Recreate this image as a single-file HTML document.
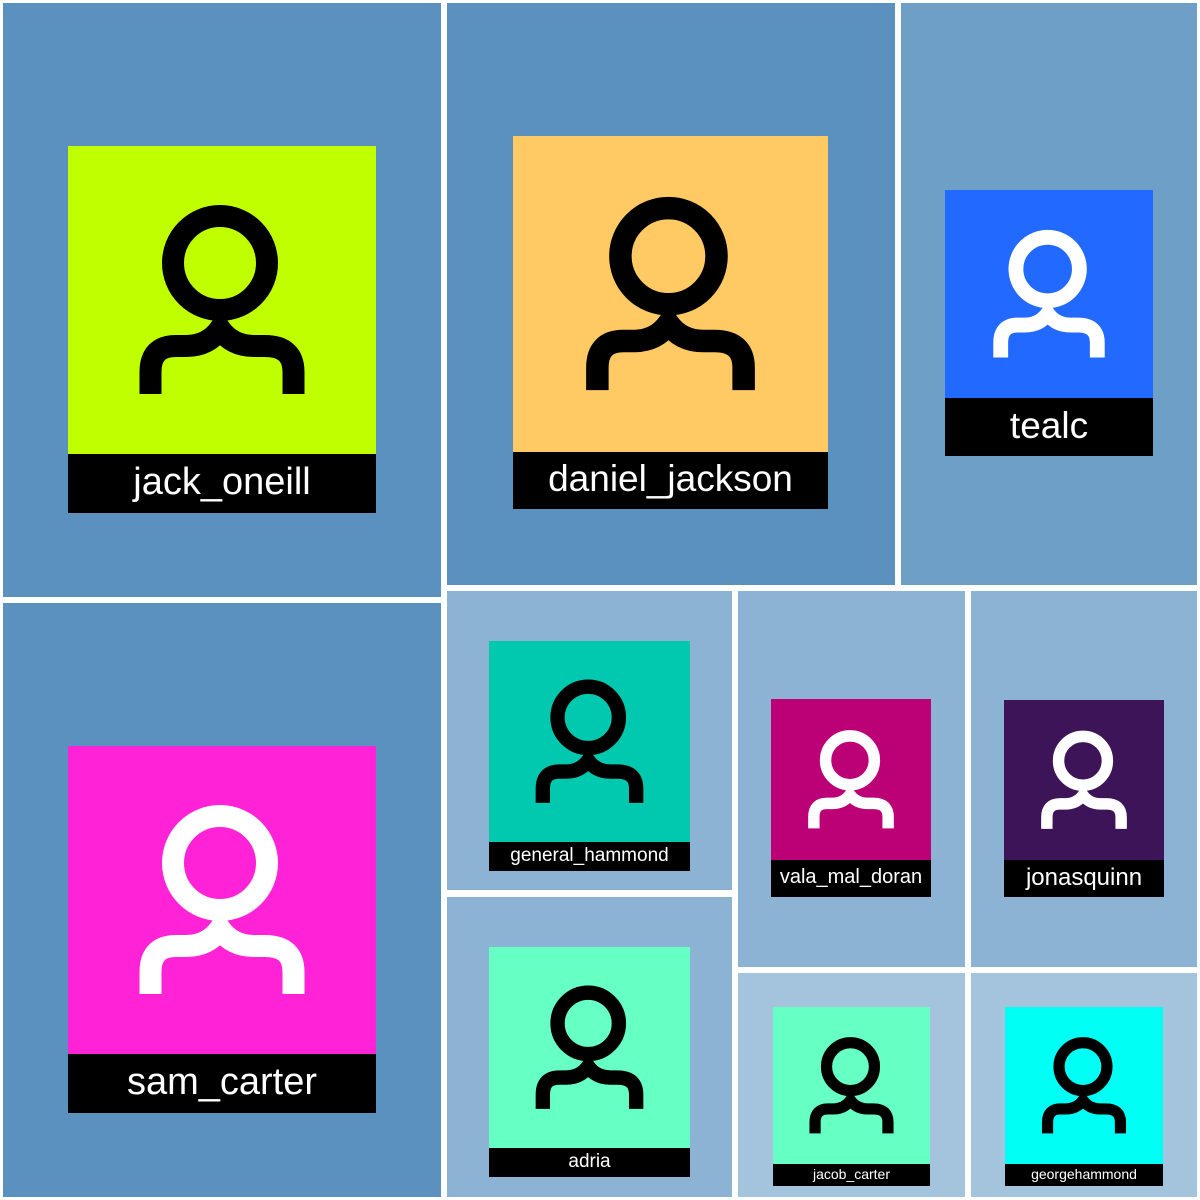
<!DOCTYPE html>
<html><head><meta charset="utf-8"><style>
html,body{margin:0;padding:0}
body{width:1200px;height:1200px;background:#fff;position:relative;overflow:hidden;font-family:"Liberation Sans",sans-serif}
.c{position:absolute}
.img{position:absolute}
.img svg{display:block;width:100%;height:100%}
.lab{position:absolute;background:#000;color:#fff;text-align:center;white-space:nowrap}
</style></head><body>
<svg width="0" height="0" style="position:absolute"><defs>
<g id="ic" fill="none" stroke-width="22"><circle cx="152" cy="117" r="47"/><path d="M82.5 248V226Q82.5 200 108 200H118Q140 200 152 183Q164 200 186 200H197Q225.5 200 225.5 226V248"/></g>
</defs></svg>

<div class="c" style="left:3px;top:3px;width:438px;height:594px;background:#5b91bf"></div>
<div class="c" style="left:447px;top:3px;width:448px;height:582px;background:#5b91bf"></div>
<div class="c" style="left:901px;top:3px;width:296px;height:582px;background:#6e9fc6"></div>
<div class="c" style="left:3px;top:603px;width:438px;height:594px;background:#5b91bf"></div>
<div class="c" style="left:447px;top:591px;width:285px;height:299px;background:#8cb2d4"></div>
<div class="c" style="left:447px;top:897px;width:285px;height:300px;background:#8cb2d4"></div>
<div class="c" style="left:738px;top:591px;width:227px;height:376px;background:#8cb2d4"></div>
<div class="c" style="left:971px;top:591px;width:226px;height:376px;background:#8cb2d4"></div>
<div class="c" style="left:738px;top:973px;width:227px;height:224px;background:#a4c3dc"></div>
<div class="c" style="left:971px;top:973px;width:226px;height:224px;background:#a4c3dc"></div>

<div class="img" style="left:68px;top:146px;width:308px;height:308px;background:#bfff00"><svg viewBox="0 0 308 308"><use href="#ic" stroke="#000"/></svg></div>
<div class="lab" style="left:68px;top:454px;width:308px;height:59px;line-height:56px;font-size:38px">jack_oneill</div>

<div class="img" style="left:513px;top:136px;width:315px;height:316px;background:#ffc964"><svg viewBox="0 0 308 308"><use href="#ic" stroke="#000"/></svg></div>
<div class="lab" style="left:513px;top:452px;width:315px;height:57px;line-height:53px;font-size:37px">daniel_jackson</div>

<div class="img" style="left:945px;top:190px;width:208px;height:208px;background:#2169ff"><svg viewBox="0 0 308 308"><use href="#ic" stroke="#fff"/></svg></div>
<div class="lab" style="left:945px;top:398px;width:208px;height:58px;line-height:55px;font-size:37px">tealc</div>

<div class="img" style="left:68px;top:746px;width:308px;height:308px;background:#ff22d6"><svg viewBox="0 0 308 308"><use href="#ic" stroke="#fff"/></svg></div>
<div class="lab" style="left:68px;top:1054px;width:308px;height:59px;line-height:56px;font-size:38px">sam_carter</div>

<div class="img" style="left:489px;top:641px;width:201px;height:201px;background:#00c9b0"><svg viewBox="0 0 308 308"><use href="#ic" stroke="#000"/></svg></div>
<div class="lab" style="left:489px;top:842px;width:201px;height:29px;line-height:27px;font-size:19px">general_hammond</div>

<div class="img" style="left:489px;top:947px;width:201px;height:201px;background:#66ffc4"><svg viewBox="0 0 308 308"><use href="#ic" stroke="#000"/></svg></div>
<div class="lab" style="left:489px;top:1148px;width:201px;height:29px;line-height:27px;font-size:19px">adria</div>

<div class="img" style="left:771px;top:699px;width:160px;height:161px;background:#bc0076"><svg viewBox="0 0 308 308"><use href="#ic" stroke="#fff"/></svg></div>
<div class="lab" style="left:771px;top:860px;width:160px;height:37px;line-height:35px;font-size:20px">vala_mal_doran</div>

<div class="img" style="left:1004px;top:700px;width:160px;height:160px;background:#3e1458"><svg viewBox="0 0 308 308"><use href="#ic" stroke="#fff"/></svg></div>
<div class="lab" style="left:1004px;top:860px;width:160px;height:37px;line-height:35px;font-size:24px">jonasquinn</div>

<div class="img" style="left:773px;top:1007px;width:157px;height:157px;background:#66ffc4"><svg viewBox="0 0 308 308"><use href="#ic" stroke="#000"/></svg></div>
<div class="lab" style="left:773px;top:1164px;width:157px;height:22px;line-height:21px;font-size:14px">jacob_carter</div>

<div class="img" style="left:1005px;top:1007px;width:158px;height:157px;background:#00fff5"><svg viewBox="0 0 308 308"><use href="#ic" stroke="#000"/></svg></div>
<div class="lab" style="left:1005px;top:1164px;width:158px;height:22px;line-height:21px;font-size:14px">georgehammond</div>
</body></html>
